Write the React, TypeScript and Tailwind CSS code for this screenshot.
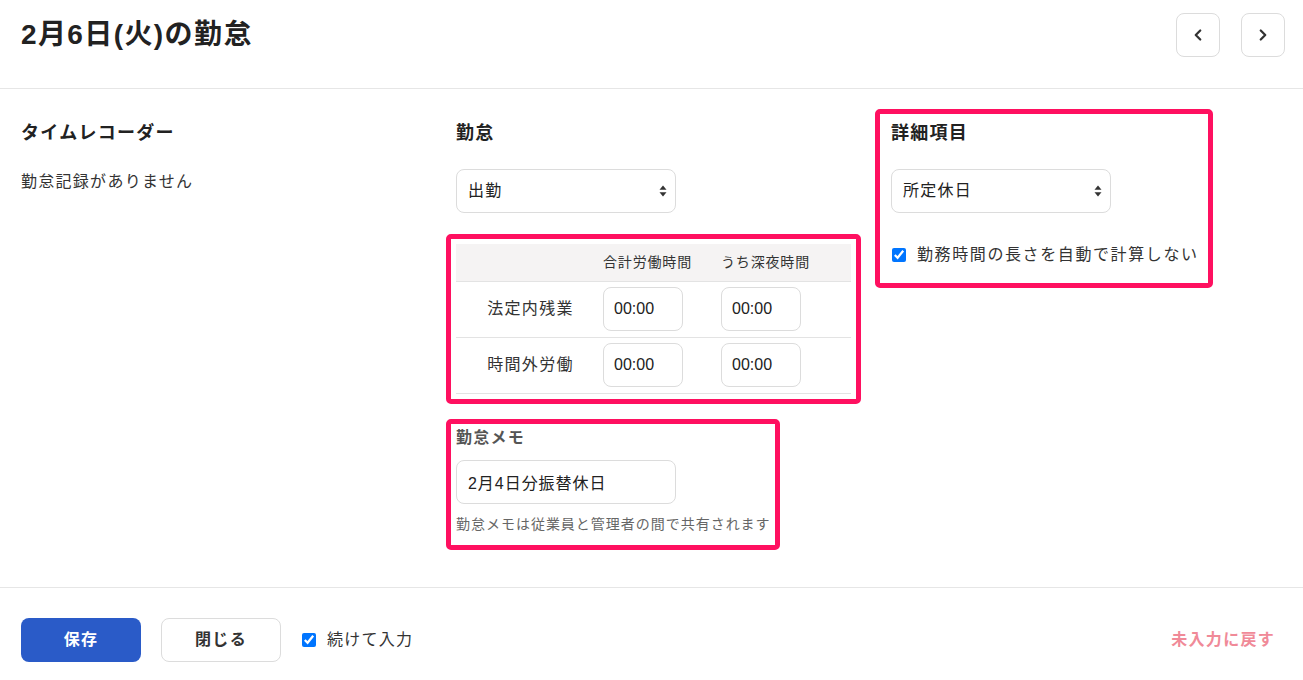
import { ChevronLeft, ChevronRight } from "lucide-react";

const font = {
  fontFamily: '"Liberation Sans", "Noto Sans CJK JP", sans-serif',
};

function SelectBox({ value }: { value: string }) {
  return (
    <div className="relative w-[220px] h-[44px]">
      <select
        defaultValue={value}
        className="appearance-none w-full h-full rounded-lg border border-[#dcdcdc] bg-white pl-[11px] pr-8 text-[16px] tracking-[0.08em] text-[#222] outline-none"
      >
        <option value={value}>{value}</option>
      </select>
      <svg
        width="8"
        height="12"
        viewBox="0 0 8 12"
        className="absolute right-[9px] top-[16px] pointer-events-none"
      >
        <path d="M4 0.5 L7.5 4.8 L0.5 4.8 Z" fill="#333" />
        <path d="M4 11.5 L7.5 7.2 L0.5 7.2 Z" fill="#333" />
      </svg>
    </div>
  );
}

function TimeInput() {
  return (
    <input
      defaultValue="00:00"
      className="w-[80px] h-[44px] rounded-lg border border-[#dcdcdc] px-[10px] text-[16px] text-[#222] outline-none"
    />
  );
}

export default function App() {
  const rows = ["法定内残業", "時間外労働"];

  return (
    <div className="w-[1303px] h-[680px] bg-white text-[#222]" style={font}>
      <div className="h-[89px] flex items-start justify-between pl-[21px] pr-[18px] pt-[13px] border-b border-[#e6e6e6]">
        <h1 className="text-[28px] leading-[44px] font-bold tracking-[0.05em]">2月6日(火)の勤怠</h1>
        <div className="flex gap-[21px]">
          <button className="w-[44px] h-[44px] rounded-lg border border-[#dcdcdc] flex items-center justify-center">
            <ChevronLeft size={18} strokeWidth={3} color="#333" />
          </button>
          <button className="w-[44px] h-[44px] rounded-lg border border-[#dcdcdc] flex items-center justify-center">
            <ChevronRight size={18} strokeWidth={3} color="#333" />
          </button>
        </div>
      </div>

      <div className="h-[499px] border-b border-[#e6e6e6] pl-[21px] pt-[32px] flex tracking-[0.08em]">
        <div className="w-[435px]">
          <h2 className="text-[18px] leading-[24px] font-bold">タイムレコーダー</h2>
          <p className="mt-[25px] text-[16px] leading-[24px] text-[#333]">勤怠記録がありません</p>
        </div>

        <div className="w-[435px]">
          <h2 className="text-[18px] leading-[24px] font-bold">勤怠</h2>
          <div className="mt-[24px]">
            <SelectBox value="出勤" />
          </div>

          <div className="mt-[21px] -ml-[10px] w-[415px] border-[5px] border-[#ff1060] rounded-[5px] p-[5px]">
            <table className="w-[395px] border-collapse text-[16px]">
              <thead>
                <tr className="bg-[#f5f3f3] h-[37px] border-b border-[#e3e3e3]">
                  <th className="w-[137px]"></th>
                  <th className="w-[118px] text-left pl-[10px] font-normal text-[14px] tracking-[0.06em] text-[#333]">合計労働時間</th>
                  <th className="text-left pl-[10px] font-normal text-[14px] tracking-[0.06em] text-[#333]">うち深夜時間</th>
                </tr>
              </thead>
              <tbody>
                {rows.map((r) => (
                  <tr key={r} className="h-[56px] border-b border-[#e3e3e3]">
                    <td className="text-center pl-[12px] text-[#333]">{r}</td>
                    <td className="pl-[10px] tracking-normal">
                      <TimeInput />
                    </td>
                    <td className="pl-[10px] tracking-normal">
                      <TimeInput />
                    </td>
                  </tr>
                ))}
              </tbody>
            </table>
          </div>

          <div className="mt-[15px] -ml-[10px] w-[334px] h-[131px] border-[5px] border-[#ff1060] rounded-[5px] pl-[5px] pt-[2px]">
            <h3 className="text-[16px] leading-[24px] font-bold text-[#555]">勤怠メモ</h3>
            <input
              defaultValue="2月4日分振替休日"
              className="mt-[10px] w-[220px] h-[44px] rounded-lg border border-[#dcdcdc] px-[11px] text-[16px] tracking-[0.06em] text-[#222] outline-none"
            />
            <p className="mt-[10px] text-[14px] leading-[20px] tracking-[0.07em] whitespace-nowrap text-[#666]">勤怠メモは従業員と管理者の間で共有されます</p>
          </div>
        </div>

        <div>
          <div className="-mt-[12px] -ml-[16px] w-[338px] h-[179px] border-[5px] border-[#ff1060] rounded-[5px] pl-[11px] pt-[7px]">
            <h2 className="text-[18px] leading-[24px] font-bold">詳細項目</h2>
            <div className="mt-[24px]">
              <SelectBox value="所定休日" />
            </div>
            <label className="mt-[30px] flex items-center gap-[11px] text-[16px] tracking-[0.1em] text-[#333]">
              <input type="checkbox" defaultChecked className="w-[14px] h-[14px] ml-[1px]" />
              勤務時間の長さを自動で計算しない
            </label>
          </div>
        </div>
      </div>

      <div className="h-[91px] flex items-start justify-between pl-[21px] pr-[28px] pt-[30px] tracking-[0.08em]">
        <div className="flex items-center">
          <button className="w-[120px] h-[44px] rounded-lg bg-[#2a5bc8] text-white font-bold text-[16px]">保存</button>
          <button className="ml-[20px] w-[120px] h-[44px] rounded-lg border border-[#dcdcdc] bg-white text-[#333] font-bold text-[16px]">閉じる</button>
          <label className="ml-[21px] flex items-center gap-[11px] text-[16px] text-[#333]">
            <input type="checkbox" defaultChecked className="w-[14px] h-[14px]" />
            続けて入力
          </label>
        </div>
        <button className="h-[44px] text-[16px] font-bold text-[#f08a98]">未入力に戻す</button>
      </div>
    </div>
  );
}
